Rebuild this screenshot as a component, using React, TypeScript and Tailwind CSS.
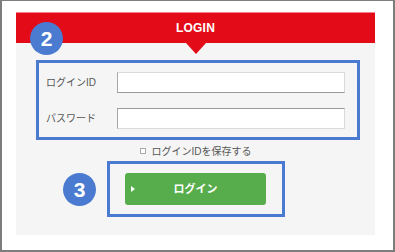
import React from 'react';

const jp = { fontFamily: '"Liberation Sans", "Noto Sans CJK JP", sans-serif' };

const Badge: React.FC<{ n: string; className: string }> = ({ n, className }) => (
  <div
    className={`absolute w-[33px] h-[33px] rounded-full bg-[#4a7bd1] flex items-center justify-center text-white font-bold text-[21px] leading-none ${className}`}
  >
    {n}
  </div>
);

export default function App() {
  return (
    <div
      style={jp}
      className="w-[395px] h-[252px] bg-white border-l-2 border-r-2 border-b-2 border-t border-[#7d7d7d] pl-[14px] pt-[11px]"
    >
      <div className="relative w-[359px] h-[223px] bg-[#f5f5f5]">
        {/* header */}
        <div className="h-[31px] bg-[#e30b17] border-t border-t-[#f0828a] flex items-center justify-center">
          <span className="text-white font-bold text-[12px] tracking-[0.2px]">LOGIN</span>
        </div>
        <div className="absolute left-1/2 top-[31px] -translate-x-1/2 w-0 h-0 border-l-[10px] border-r-[10px] border-t-[11px] border-l-transparent border-r-transparent border-t-[#e30b17]" />

        {/* fields */}
        <div className="ml-[20px] mt-[17px] w-[324px] h-[80px] border-[3px] border-[#4a7bd1] pt-[9px] pl-[7px]">
          <div className="flex items-center">
            <span className="w-[71px] text-[10px] text-[#555]">ログインID</span>
            <div className="w-[228px] h-[21px] bg-white border border-[#dadada] border-l-[#a8a8a8] border-b-[#9a9a9a]" />
          </div>
          <div className="flex items-center mt-[15px]">
            <span className="w-[71px] text-[10px] text-[#555]">パスワード</span>
            <div className="w-[228px] h-[21px] bg-white border border-[#dadada] border-l-[#a8a8a8] border-t-[#9a9a9a]" />
          </div>
        </div>

        {/* remember */}
        <div className="mt-[3px] h-[16px] flex items-center justify-center text-[10px] text-[#555]">
          <span className="w-[6px] h-[6px] border border-[#aaa] bg-white mr-[6px]" />
          <span>ログインIDを保存する</span>
        </div>

        {/* button */}
        <div className="ml-[91px] mt-[2px] w-[178px] h-[56px] border-[3px] border-[#4a7bd1] pt-[9px] pl-[15px]">
          <button className="relative w-[141px] h-[32px] bg-[#57ad4b] rounded-[3px] flex items-center justify-center">
            <span className="absolute left-[6px] top-1/2 -translate-y-1/2 w-0 h-0 border-l-[4px] border-l-white border-y-[3px] border-y-transparent" />
            <span className="text-white font-bold text-[11px]">ログイン</span>
          </button>
        </div>

        <Badge n="2" className="left-[14px] top-[10px]" />
        <Badge n="3" className="left-[47px] top-[161px]" />
      </div>
    </div>
  );
}
